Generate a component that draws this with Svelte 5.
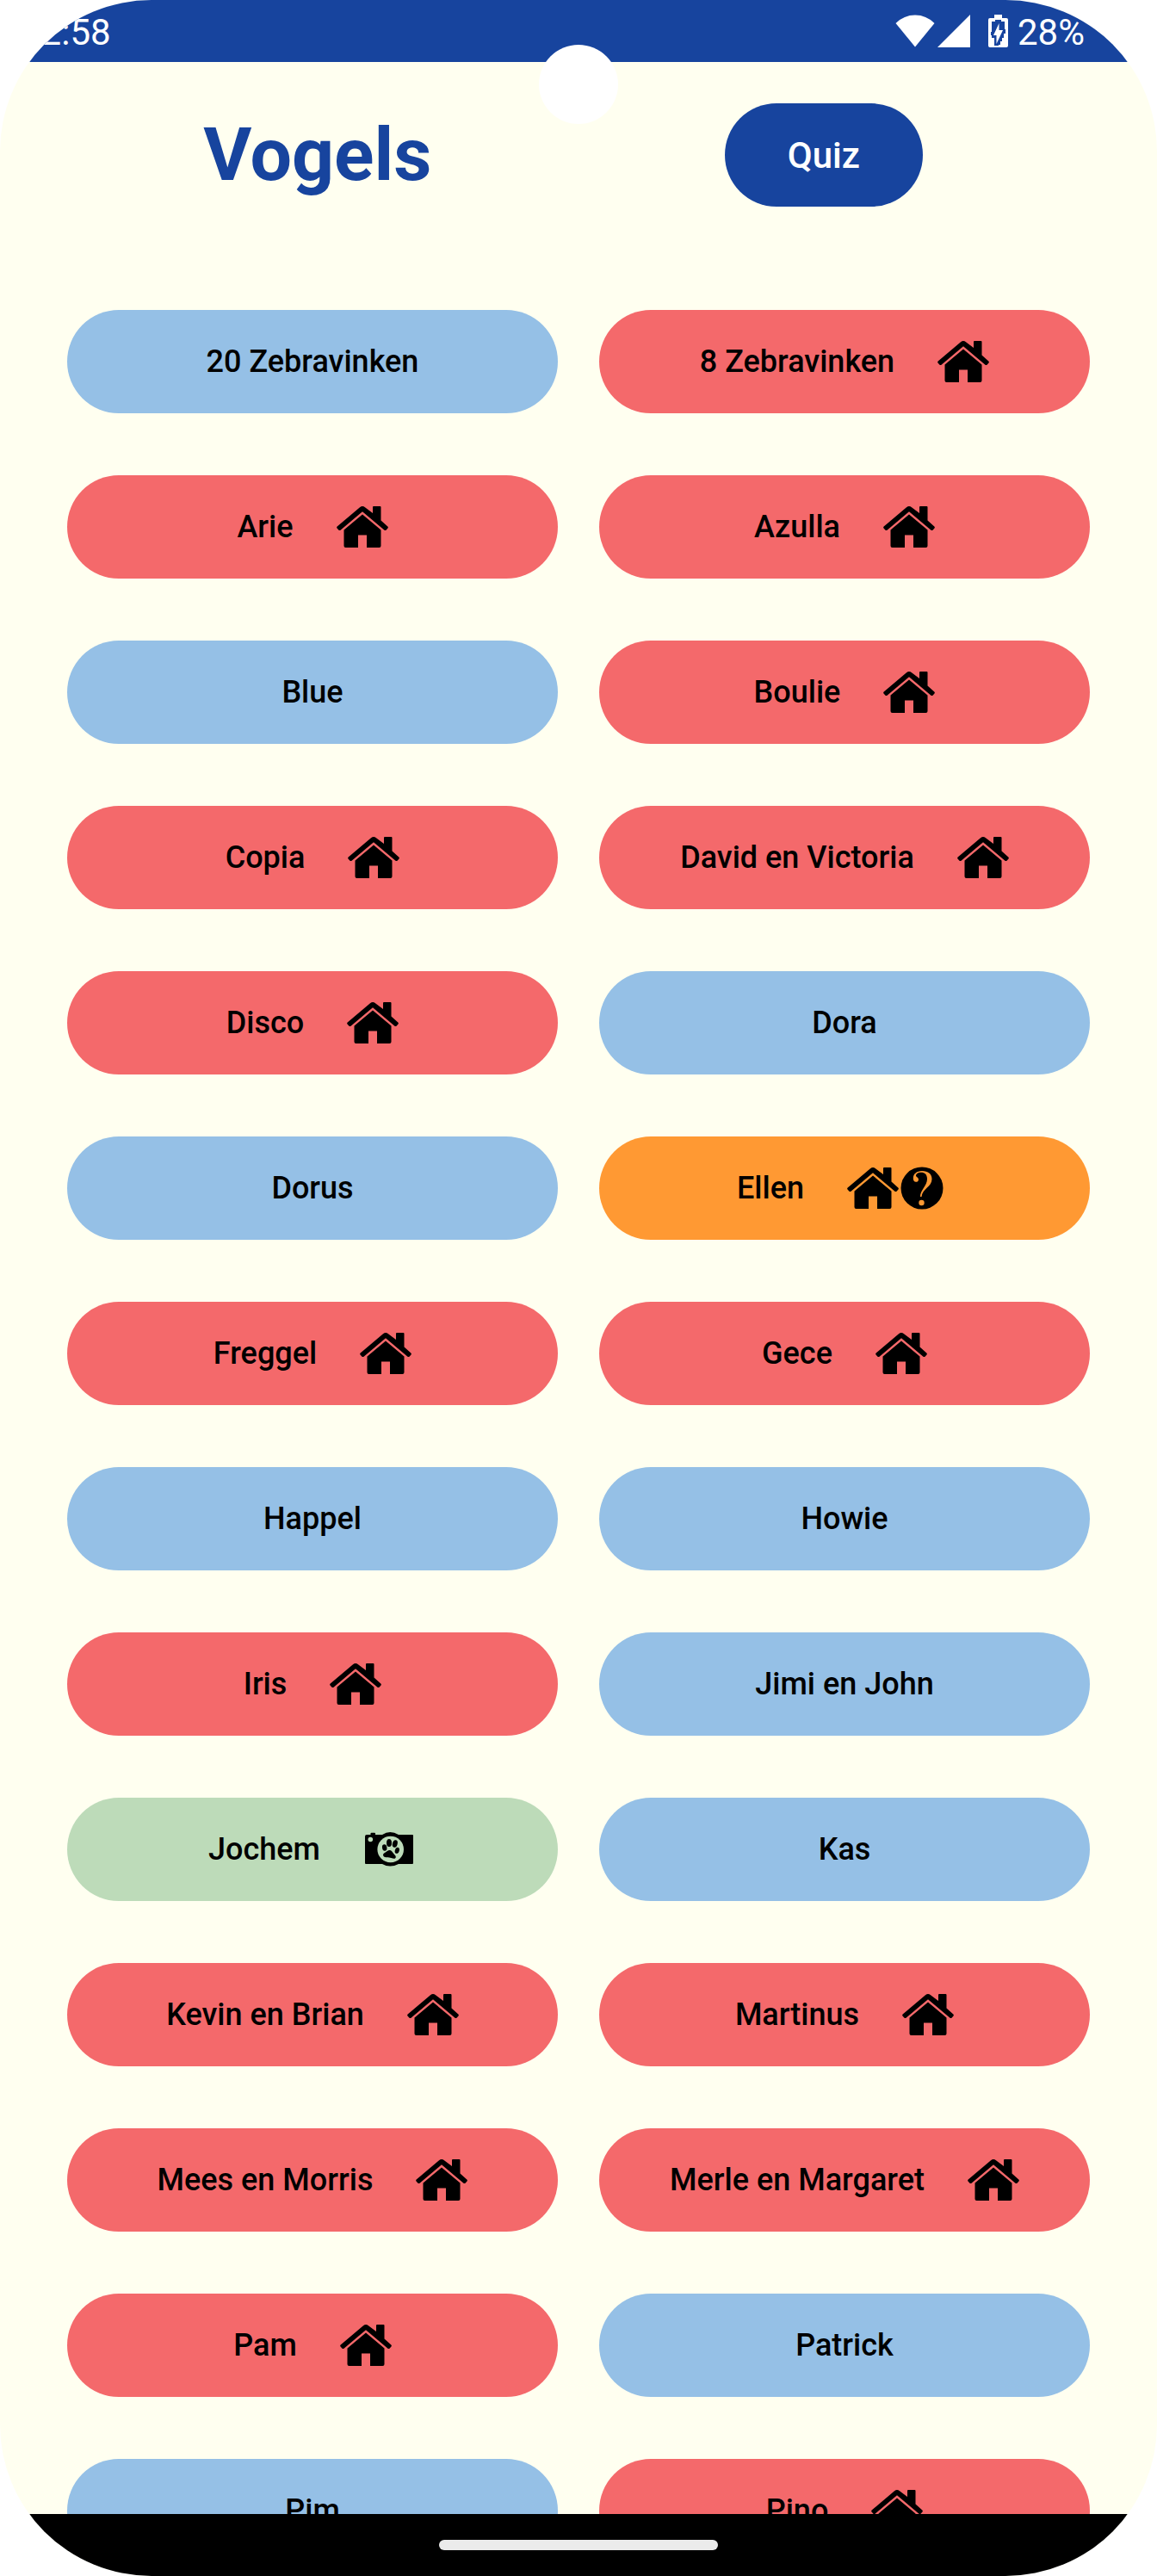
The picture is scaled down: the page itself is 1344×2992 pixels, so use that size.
<script>
  const birds = [
    { name: '20 Zebravinken', tone: 'blue', icons: [] },
    { name: '8 Zebravinken', tone: 'red', icons: ['house'] },
    { name: 'Arie', tone: 'red', icons: ['house'] },
    { name: 'Azulla', tone: 'red', icons: ['house'] },
    { name: 'Blue', tone: 'blue', icons: [] },
    { name: 'Boulie', tone: 'red', icons: ['house'] },
    { name: 'Copia', tone: 'red', icons: ['house'] },
    { name: 'David en Victoria', tone: 'red', icons: ['house'] },
    { name: 'Disco', tone: 'red', icons: ['house'] },
    { name: 'Dora', tone: 'blue', icons: [] },
    { name: 'Dorus', tone: 'blue', icons: [] },
    { name: 'Ellen', tone: 'orange', icons: ['house', 'question'] },
    { name: 'Freggel', tone: 'red', icons: ['house'] },
    { name: 'Gece', tone: 'red', icons: ['house'] },
    { name: 'Happel', tone: 'blue', icons: [] },
    { name: 'Howie', tone: 'blue', icons: [] },
    { name: 'Iris', tone: 'red', icons: ['house'] },
    { name: 'Jimi en John', tone: 'blue', icons: [] },
    { name: 'Jochem', tone: 'green', icons: ['camera'] },
    { name: 'Kas', tone: 'blue', icons: [] },
    { name: 'Kevin en Brian', tone: 'red', icons: ['house'] },
    { name: 'Martinus', tone: 'red', icons: ['house'] },
    { name: 'Mees en Morris', tone: 'red', icons: ['house'] },
    { name: 'Merle en Margaret', tone: 'red', icons: ['house'] },
    { name: 'Pam', tone: 'red', icons: ['house'] },
    { name: 'Patrick', tone: 'blue', icons: [] },
    { name: 'Pim', tone: 'blue', icons: [] },
    { name: 'Pino', tone: 'red', icons: ['house'] }
  ];
</script>

<div class="screen">
  <div class="status">
    <span>12:58</span>
    <div class="indicators">
      <svg class="wifi" width="46" height="38" viewBox="0 0 46 38" aria-hidden="true">
        <path d="M0.5 10 Q10 0.5 23 0.5 Q36 0.5 45.500 10 L23 37.500 Z" />
      </svg>
      <svg class="signal" width="38" height="38" viewBox="0 0 38 38" aria-hidden="true">
        <path d="M38 0 V38 H0 Z" />
      </svg>
      <svg class="battery" width="23" height="38" viewBox="0 0 23 38" aria-hidden="true">
        <path d="M7 0 H16 V4 H21 Q23 4 23 6 V36 Q23 38 21 38 H2 Q0 38 0 36 V6 Q0 4 2 4 H7 Z" />
        <path class="cut" d="M4 8 H8 V6 H15 V8 H19 V17 H20 V22 H18 V27 H16 V31 H14 V35 H12 V36 H7 V27 H4 V24 H3 V20 H4 Z" />
        <path d="M12.500 10 V18 H17 L9.500 34 V24 H6 Z" />
      </svg>
      <span>28%</span>
    </div>
  </div>
  <div class="camera-hole"></div>

  <main>
    <header>
      <h1>Vogels</h1>
      <button class="quiz">Quiz</button>
    </header>
    <div class="grid">
      {#each birds as bird}
        <button class="bird {bird.tone}">
          <span>{bird.name}</span>
          {#if bird.icons.length}
            <span class="icons">
              {#each bird.icons as icon}
                {#if icon === 'house'}
                  <svg width="60" height="48" viewBox="0 0 60 48" aria-hidden="true">
                    <path d="M42 8 V1 Q42 0 43 0 H50.500 Q51.500 0 51.500 1 V16.500 L59.300 23.500 Q60.300 24.500 59.500 25.500 L57.500 27.700 Q56.500 28.500 55.500 27.700 L30 6.300 L4.500 27.700 Q3.500 28.500 2.500 27.700 L0.500 25.500 Q-0.300 24.500 0.700 23.500 L27 1.200 Q30 -1.200 33 1.200 Z" />
                    <path d="M30 9.500 L51.500 27.500 V46 Q51.500 48 49.500 48 H35 V33.500 H25 V48 H10.500 Q8.500 48 8.500 46 V27.500 Z" />
                  </svg>
                {:else if icon === 'question'}
                  <svg width="62" height="50" viewBox="0 0 62 50" aria-hidden="true">
                    <circle cx="27" cy="25" r="24.500" />
                    <path class="hole" d="M25 35 C24.500 28 33 22 33 14.500 C33 9 30 6.800 26 6.800 C23 6.800 20 8.300 20 10.500 C20 12 23 12.500 23 15 C23 17 21.500 17.800 20 17.800 C17.800 17.800 16.800 16 16.800 13.500 C16.800 8.500 21 5 27 5 C34 5 38.500 8.500 38.500 14.500 C38.500 23.500 27.500 25.500 26.500 35 Z" />
                    <circle class="hole" cx="26.500" cy="42" r="3.200" />
                  </svg>
                {:else}
                  <svg width="62" height="40" viewBox="0 0 62 40" aria-hidden="true">
                    <path d="M4 3 H8.500 V1.500 Q8.500 0.700 9.500 0.700 H13 Q14 0.700 14 1.500 V3 H22 Q31 -3 41 3 H57 Q58 3 58 4 V36 Q58 37 57 37 H41 Q31 42 22 37 H3 Q2 37 2 36 V5 Q2 3 4 3 Z" />
                    <circle class="hole" cx="8.300" cy="8.500" r="2.800" />
                    <circle class="hole" cx="31.700" cy="20" r="15.300" />
                    <ellipse cx="30" cy="12.500" rx="3" ry="4.500" />
                    <ellipse cx="36.800" cy="13.500" rx="2.900" ry="4.300" transform="rotate(15 36.800 13.500)" />
                    <ellipse cx="24.700" cy="18" rx="2.700" ry="3.800" transform="rotate(-10 24.700 18)" />
                    <ellipse cx="39.300" cy="21.300" rx="2.500" ry="3.700" transform="rotate(15 39.300 21.300)" />
                    <path d="M30 21 C32 20.500 33.500 22 34.500 24 C36 26.500 38 27 37.800 29 C37.500 31.500 35 30.800 32.500 30 C29 29 27 29.800 25 29 C22.500 28 22.500 25.500 24.500 24.300 C27 23 28 21.500 30 21 Z" />
                  </svg>
                {/if}
              {/each}
            </span>
          {/if}
        </button>
      {/each}
    </div>
  </main>

  <div class="nav"><div class="handle"></div></div>
</div>

<style>
  :global(body) {
    margin: 0;
    background: #ffffff;
  }
  .screen {
    position: relative;
    display: flex;
    flex-direction: column;
    height: 100vh;
    overflow: hidden;
    border-radius: 176px;
    background: #fffff0;
    font-family: Roboto, 'Liberation Sans', sans-serif;
  }
  .status {
    flex: none;
    display: flex;
    justify-content: space-between;
    align-items: center;
    box-sizing: border-box;
    height: 72px;
    padding: 0 84px 0 24px;
    background: #17449e;
    color: #ffffff;
    font-size: 42px;
    line-height: 68px;
  }
  .status span {
    padding-top: 4px;
  }
  .indicators {
    display: flex;
    align-items: center;
  }
  .indicators span {
    display: block;
  }
  .indicators svg {
    fill: #ffffff;
  }
  .signal {
    margin: 0 21px 0 3px;
  }
  .battery {
    margin-right: 11px;
  }
  .battery .cut {
    fill: #17449e;
  }
  .camera-hole {
    position: absolute;
    top: 52px;
    left: 50%;
    width: 92px;
    height: 92px;
    margin-left: -46px;
    border-radius: 50%;
    background: #ffffff;
  }
  main {
    flex: 1;
    min-height: 0;
    overflow: hidden;
  }
  header {
    display: flex;
    justify-content: space-around;
    align-items: center;
    padding: 48px 102px 120px 66px;
  }
  h1 {
    margin: 0;
    color: #17449e;
    font-size: 86px;
    line-height: 120px;
    font-weight: 700;
  }
  button {
    border: 0;
    height: 120px;
    border-radius: 60px;
    font-family: inherit;
    font-weight: 500;
  }
  .quiz {
    padding: 0 73px;
    background: #17449e;
    color: #ffffff;
    font-size: 42px;
  }
  .grid {
    display: grid;
    grid-template-columns: 1fr 1fr;
    gap: 72px 48px;
    padding: 0 78px;
  }
  .bird {
    display: flex;
    justify-content: center;
    align-items: center;
    gap: 50px;
    padding: 0;
    color: #000000;
    font-size: 36px;
  }
  .icons {
    display: flex;
    align-items: center;
  }
  .blue {
    background: #95c0e6;
  }
  .red {
    background: #f4696b;
  }
  .orange {
    background: #ff9933;
  }
  .green {
    background: #bddbb9;
  }
  .orange .hole {
    fill: #ff9933;
  }
  .green .hole {
    fill: #bddbb9;
  }
  .nav {
    flex: none;
    display: flex;
    justify-content: center;
    align-items: center;
    height: 72px;
    background: #000000;
  }
  .handle {
    width: 324px;
    height: 12px;
    border-radius: 6px;
    background: #ebebeb;
  }
</style>
